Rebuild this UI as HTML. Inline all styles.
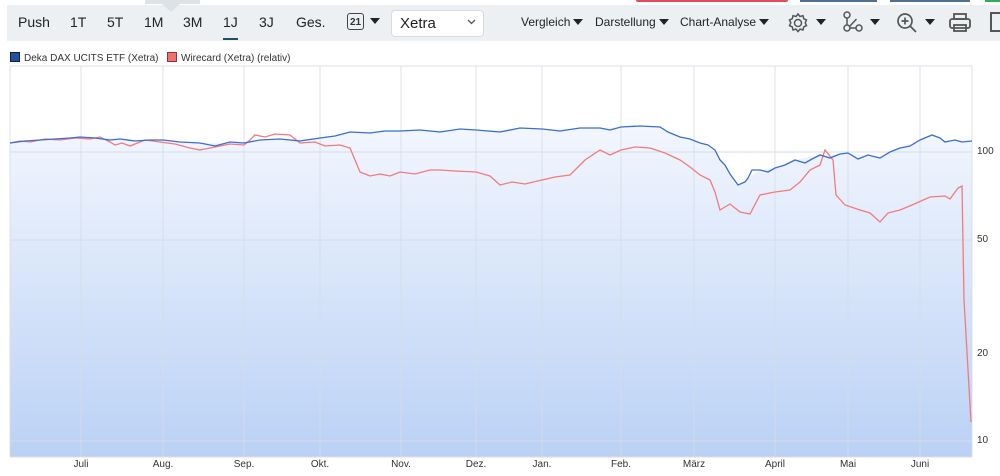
<!DOCTYPE html>
<html><head><meta charset="utf-8"><style>
body{margin:0;width:1000px;height:476px;background:#fff;font-family:"Liberation Sans",sans-serif;position:relative;overflow:hidden}
.tb{position:absolute;left:7px;top:5px;width:993px;height:36px;background:#edf0f3}
.t{position:absolute;top:14px;font-size:14px;color:#222}
.s{position:absolute;top:15px;font-size:12px;color:#222}
.tri{display:inline-block;width:0;height:0;border-left:5px solid transparent;border-right:5px solid transparent;border-top:6px solid #222;margin-left:3px;vertical-align:1px}
.lg{position:absolute;top:52px;font-size:10px;color:#333}
.sq{display:inline-block;width:8px;height:8px;margin-right:4px;vertical-align:-1px}
.xl{position:absolute;top:459px;font-size:10px;color:#333;transform:translateX(-50%)}
.yl{position:absolute;left:977px;font-size:10px;color:#333}
</style></head><body>
<div style="position:absolute;left:636px;top:0;width:152px;height:2px;background:#e64a5c;border-radius:0 0 3px 3px"></div>
<div style="position:absolute;left:800px;top:0;width:77px;height:2px;background:#4f7191"></div>
<div style="position:absolute;left:890px;top:0;width:80px;height:2px;background:#4f7191"></div>
<div style="position:absolute;left:985px;top:0;width:15px;height:2px;background:#2fae5a"></div>
<div class="tb"></div>
<div style="position:absolute;left:145px;top:0;width:55px;height:4px;background:#dde2e7"></div>
<div style="position:absolute;left:162px;top:4px;width:0;height:0;border-left:9px solid transparent;border-right:9px solid transparent;border-top:8px solid #dde2e7"></div>
<span class="t" style="left:18px">Push</span>
<span class="t" style="left:70px">1T</span>
<span class="t" style="left:107px">5T</span>
<span class="t" style="left:144px">1M</span>
<span class="t" style="left:183px">3M</span>
<span class="t" style="left:223px">1J</span>
<div style="position:absolute;left:223px;top:38px;width:15px;height:2px;background:#1d4f6b"></div>
<span class="t" style="left:259px">3J</span>
<span class="t" style="left:296px">Ges.</span>
<div style="position:absolute;left:347px;top:13px;width:17px;height:17px;border:1.5px solid #444;border-radius:3px;font-size:10px;font-weight:bold;text-align:center;line-height:17px;color:#333;box-sizing:border-box">21</div>
<span class="tri" style="position:absolute;left:367px;top:18px"></span>
<div style="position:absolute;left:391px;top:10px;width:93px;height:27px;background:#fff;border:1px solid #d8dce0;border-radius:4px;box-sizing:border-box"></div>
<span class="t" style="left:400px;top:15px;font-size:15px">Xetra</span>
<svg style="position:absolute;left:467px;top:19px" width="9" height="6"><path d="M1 1L4.5 4.5L8 1" stroke="#555" stroke-width="1.3" fill="none"/></svg>
<span class="s" style="left:521px">Vergleich<span class="tri"></span></span>
<span class="s" style="left:595px">Darstellung<span class="tri"></span></span>
<span class="s" style="left:680px">Chart-Analyse<span class="tri"></span></span>
<svg style="position:absolute;left:786px;top:11px" width="24" height="24" viewBox="0 0 24 24"><path d="M12 3l2 2.5 3-.8.7 3 2.8 1.3-1.3 2.8 1.3 2.8-2.8 1.3-.7 3-3-.8-2 2.5-2-2.5-3 .8-.7-3-2.8-1.3 1.3-2.8-1.3-2.8 2.8-1.3.7-3 3 .8z" stroke="#555" stroke-width="1.5" fill="none"/><circle cx="12" cy="12" r="3.5" stroke="#555" stroke-width="1.5" fill="none"/></svg>
<span class="tri" style="position:absolute;left:813px;top:19px"></span>
<svg style="position:absolute;left:842px;top:11px" width="22" height="22" viewBox="0 0 22 22"><g stroke="#555" stroke-width="1.5" fill="none"><circle cx="5" cy="4" r="3"/><circle cx="5" cy="17" r="3"/><circle cx="17" cy="17" r="3"/><path d="M5 7v7M7.5 15.5L14.5 8M8 17h6"/></g></svg>
<span class="tri" style="position:absolute;left:867px;top:19px"></span>
<svg style="position:absolute;left:895px;top:11px" width="24" height="24" viewBox="0 0 24 24"><g stroke="#555" stroke-width="1.7" fill="none"><circle cx="10" cy="10" r="7"/><path d="M15 15l6 6M10 6.5v7M6.5 10h7"/></g></svg>
<span class="tri" style="position:absolute;left:922px;top:19px"></span>
<svg style="position:absolute;left:948px;top:12px" width="24" height="22" viewBox="0 0 24 22"><g stroke="#555" stroke-width="1.8" fill="none"><rect x="6" y="2" width="12" height="5"/><rect x="2" y="7" width="20" height="9" rx="2"/><rect x="6" y="13" width="12" height="6"/></g></svg>
<div style="position:absolute;left:990px;top:12px;width:12px;height:20px;border:2px solid #555;box-sizing:border-box"></div>
<span class="lg" style="left:10px"><span class="sq" style="background:#1f4fa8;border:1px solid #123"></span>Deka DAX UCITS ETF (Xetra)</span>
<span class="lg" style="left:167px"><span class="sq" style="background:#f07070;border:1px solid #933"></span>Wirecard (Xetra) (relativ)</span>
<svg style="position:absolute;left:0;top:0" width="1000" height="476">
<defs><linearGradient id="g" x1="0" y1="0" x2="0" y2="1"><stop offset="0" stop-color="#f2f6fe"/><stop offset="1" stop-color="#bad1f5"/></linearGradient></defs>
<polygon fill="url(#g)" points="10,143 40,140 80,137 120,139 163,140 200,143 244,143 280,139 320,138 350,132 400,131 476,130 542,129 600,128 621,127 660,127 680,137 700,143 715,150 725,165 738,185 748,178 760,170 775,168 795,160 820,155 848,153 880,158 900,148 920,140 932,135 945,142 955,140 972,141 972,457 10,457"/>
<g stroke="#dde2ea" stroke-width="1">
<line x1="10" y1="66" x2="972" y2="66"/>
<path d="M81 66V457M163 66V457M244 66V457M320 66V457M401 66V457M476 66V457M542 66V457M621 66V457M694 66V457M775 66V457M848 66V457M920 66V457M10 66V457M972 66V457" stroke="#d6dce6" opacity=".8"/>
<path d="M10 152H972M10 240H972M10 354H972M10 441H972" stroke="#d6dce6"/>
</g>
<line x1="10" y1="457" x2="972" y2="457" stroke="#ddd"/>
<polyline fill="none" stroke="#f47a7a" stroke-width="1.3" points="10,143 20,141 30,142 45,139 60,140 75,138 90,139 100,137 110,142 115,145 122,143 130,146 145,140 160,142 175,144 190,148 200,150 215,147 230,144 244,145 250,140 255,135 265,137 275,134 290,135 300,143 315,142 325,146 340,145 350,148 355,160 360,172 370,176 380,174 390,176 400,172 415,174 430,170 440,170 455,171 476,172 490,176 500,185 512,182 525,184 542,180 555,177 570,175 585,160 600,150 610,155 621,150 635,147 650,148 665,153 680,160 690,167 700,175 710,180 715,192 720,210 730,204 740,212 750,214 760,195 775,192 790,190 800,182 810,170 820,165 825,150 833,160 836,195 845,205 860,210 870,213 880,222 888,213 900,210 912,205 930,197 945,196 950,199 958,188 962,186 964,300 971,422"/>
<polyline fill="none" stroke="#3a6fcc" stroke-width="1.3" points="10,143 25,141 40,140 55,139 70,138 80,137 95,138 110,140 120,139 135,141 150,140 163,140 180,142 200,143 215,146 230,142 244,143 260,140 280,139 300,141 320,138 335,136 350,132 370,133 385,131 400,131 420,130 440,132 460,129 476,130 500,132 520,128 542,129 560,131 580,128 600,128 610,130 621,127 640,126 660,127 668,132 680,137 690,139 700,143 708,145 715,150 720,160 725,165 730,174 738,185 745,182 748,178 752,170 760,170 768,172 775,168 785,165 795,160 805,163 812,159 820,155 830,158 840,154 848,153 858,159 868,155 880,158 890,152 900,148 910,146 920,140 932,135 940,138 945,142 950,141 955,140 962,142 972,141"/>
</svg>
<span class="xl" style="left:81px">Juli</span><span class="xl" style="left:163px">Aug.</span><span class="xl" style="left:244px">Sep.</span><span class="xl" style="left:320px">Okt.</span><span class="xl" style="left:401px">Nov.</span><span class="xl" style="left:476px">Dez.</span><span class="xl" style="left:542px">Jan.</span><span class="xl" style="left:621px">Feb.</span><span class="xl" style="left:694px">März</span><span class="xl" style="left:775px">April</span><span class="xl" style="left:848px">Mai</span><span class="xl" style="left:920px">Juni</span>
<span class="yl" style="top:146px">100</span><span class="yl" style="top:234px">50</span><span class="yl" style="top:348px">20</span><span class="yl" style="top:435px">10</span>
</body></html>
